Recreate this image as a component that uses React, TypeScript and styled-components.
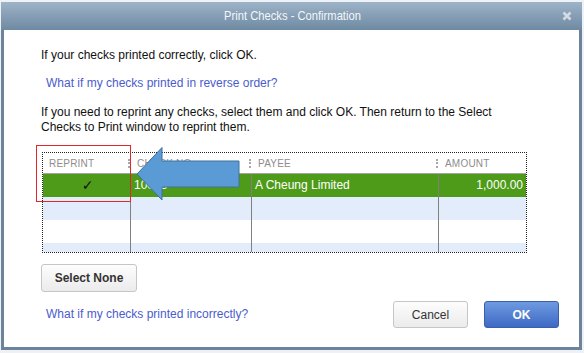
import React from "react";
import styled, { createGlobalStyle } from "styled-components";

const GlobalStyle = createGlobalStyle`
  html, body { margin: 0; padding: 0; background: #eef2f6; }
  body {
    font-family: "Liberation Sans", Arial, sans-serif;
    width: 584px; height: 353px; overflow: hidden;
  }
  * { box-sizing: border-box; }
`;

const Window = styled.div`
  margin: 2px 0 0 1px;
  width: 581px;
  display: flex;
  flex-direction: column;
`;

const TitleBar = styled.div`
  height: 28px;
  background: linear-gradient(#9db3c8, #6e8aa2);
  display: grid;
  grid-template-columns: 1fr auto 1fr;
  align-items: center;
  color: #f4f6f8;
  font-size: 11.2px;
`;

const Title = styled.div`
  grid-column: 2;
  padding-left: 2px;
  transform: scaleY(1.12);
`;

const CloseBox = styled.div`
  grid-column: 3;
  justify-self: end;
  padding-right: 10px;
  display: flex;
  align-items: center;
  margin-top: -1px;
`;

const Body = styled.div`
  height: 320px;
  background: #fff;
  border: 3px solid #6c8399;
  border-top: none;
  padding: 18px 20px 0 37px;
  display: flex;
  flex-direction: column;
  font-size: 12px;
  line-height: 15px;
  color: #111;
`;

const Para = styled.div<{ $mt?: number; $w?: number }>`
  margin-top: ${(p) => p.$mt ?? 0}px;
  width: ${(p) => (p.$w ? `${p.$w}px` : "auto")};
`;

const Link = styled.a<{ $mt?: number }>`
  display: block;
  margin-top: ${(p) => p.$mt ?? 0}px;
  margin-left: 5px;
  color: #4b5ccd;
  text-decoration: none;
  cursor: pointer;
`;

const TableWrap = styled.div`
  position: relative;
  margin-top: 17px;
  margin-left: 1px;
  width: 485px;
`;

const Table = styled.div`
  height: 101px;
  border: 1px dotted #222;
  overflow: hidden;
  background: #fff;
`;

const cols = "88px 121px 187px 87px";

const HeaderRow = styled.div`
  display: grid;
  grid-template-columns: ${cols};
  height: 21px;
  border-bottom: 1px solid #a4a4a4;
`;

const HeadCell = styled.div`
  display: flex;
  align-items: center;
  justify-content: space-between;
  padding-left: 6px;
  font-size: 10px;
  letter-spacing: 0.2px;
  color: #8d8d8d;
`;

const Grip = styled.span`
  width: 2px;
  height: 9px;
  margin-right: 1px;
  margin-top: 1px;
  border-left: 2px dotted #a8a8a8;
`;

const Row = styled.div<{ $bg: string }>`
  display: grid;
  grid-template-columns: ${cols};
  height: 23px;
  background: ${(p) => p.$bg};
  color: #fff;
`;

const Cell = styled.div<{ $align?: string; $last?: boolean }>`
  display: flex;
  align-items: center;
  justify-content: ${(p) => p.$align ?? "flex-start"};
  padding: 0 3px 0 3px;
  border-right: ${(p) => (p.$last ? "none" : "1px solid #808080")};
  font-size: 12px;
  white-space: nowrap;
  overflow: hidden;
`;

const Check = styled.span`
  font-family: "DejaVu Sans", sans-serif;
  font-size: 14px;
  color: #111;
  margin-left: 2px;
`;

const RedBox = styled.div`
  position: absolute;
  left: -6px;
  top: -7px;
  width: 95px;
  height: 57px;
  border: 1px solid #e3262b;
  pointer-events: none;
`;

const ArrowSvg = styled.svg`
  position: absolute;
  left: 93px;
  top: -6px;
`;

const Button = styled.button<{ $primary?: boolean; $bold?: boolean; $w: number; $h: number }>`
  width: ${(p) => p.$w}px;
  height: ${(p) => p.$h}px;
  border-radius: 3px;
  border: 1px solid ${(p) => (p.$primary ? "#3b5ea9" : "#c6c6c6")};
  background: ${(p) =>
    p.$primary
      ? "linear-gradient(#6e9ae0, #3e69c6)"
      : "linear-gradient(#fdfdfd, #ebebeb)"};
  color: ${(p) => (p.$primary ? "#fff" : "#333")};
  font-family: "Liberation Sans", Arial, sans-serif;
  font-size: 12px;
  font-weight: ${(p) => (p.$bold ? 700 : 400)};
  padding: 0;
  cursor: pointer;
`;

const SelectRow = styled.div`
  margin-top: 11px;
`;

const Footer = styled.div`
  margin-top: 9px;
  display: flex;
  align-items: center;
  justify-content: space-between;
`;

const Buttons = styled.div`
  display: flex;
  gap: 16px;
  align-items: center;
`;

export default function App() {
  return (
    <>
      <GlobalStyle />
      <Window>
        <TitleBar>
          <Title>Print Checks - Confirmation</Title>
          <CloseBox>
            <svg width="10" height="10" viewBox="0 0 10 10">
              <path d="M1.5 1.5 L8.5 8.5 M8.5 1.5 L1.5 8.5" stroke="#d5dbe1" strokeWidth="2.6" strokeLinecap="butt" />
            </svg>
          </CloseBox>
        </TitleBar>
        <Body>
          <Para>If your checks printed correctly, click OK.</Para>
          <Link $mt={13}>What if my checks printed in reverse order?</Link>
          <Para $mt={14} $w={488}>
            If you need to reprint any checks, select them and click OK. Then return to the Select Checks to Print window to reprint them.
          </Para>
          <TableWrap>
            <Table>
              <HeaderRow>
                <HeadCell>REPRINT<Grip /></HeadCell>
                <HeadCell>CHECK NO.<Grip /></HeadCell>
                <HeadCell>PAYEE<Grip /></HeadCell>
                <HeadCell>AMOUNT</HeadCell>
              </HeaderRow>
              <Row $bg="#4e9b1a">
                <Cell $align="center"><Check>✓</Check></Cell>
                <Cell>10035</Cell>
                <Cell>A Cheung Limited</Cell>
                <Cell $align="flex-end" $last>1,000.00</Cell>
              </Row>
              <Row $bg="#e2ecfb">
                <Cell /><Cell /><Cell /><Cell $last />
              </Row>
              <Row $bg="#ffffff">
                <Cell /><Cell /><Cell /><Cell $last />
              </Row>
              <Row $bg="#e2ecfb">
                <Cell /><Cell /><Cell /><Cell $last />
              </Row>
            </Table>
            <RedBox />
            <ArrowSvg width="108" height="58" viewBox="0 0 108 58">
              <polygon
                points="2,28 27,1.5 27,15 104,15 104,41 27,41 27,54"
                fill="#5b9bd5"
                stroke="#41719c"
                strokeWidth="1"
              />
            </ArrowSvg>
          </TableWrap>
          <SelectRow>
            <Button $bold $w={96} $h={28}>Select None</Button>
          </SelectRow>
          <Footer>
            <Link>What if my checks printed incorrectly?</Link>
            <Buttons>
              <Button $w={75} $h={27}>Cancel</Button>
              <Button $primary $bold $w={75} $h={27}>OK</Button>
            </Buttons>
          </Footer>
        </Body>
      </Window>
    </>
  );
}
